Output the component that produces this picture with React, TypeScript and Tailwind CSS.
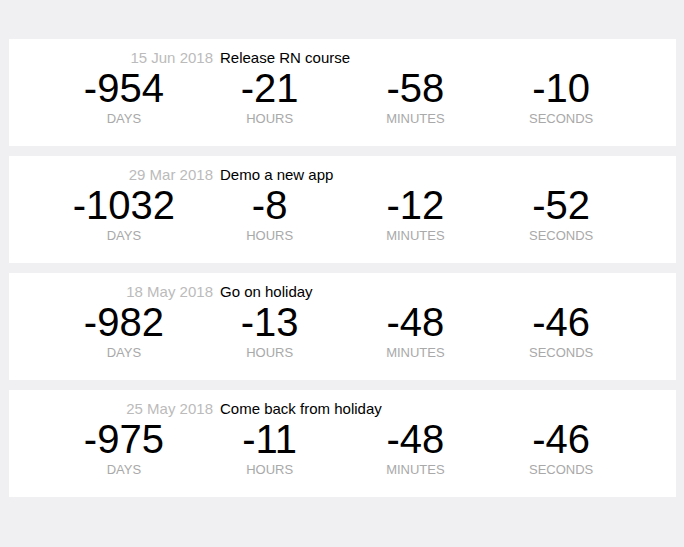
import React from 'react';

interface Countdown {
  id: string;
  date: string;
  title: string;
  days: number;
  hours: number;
  minutes: number;
  seconds: number;
}

const events: Countdown[] = [
  { id: '1', date: '15 Jun 2018', title: 'Release RN course', days: -954, hours: -21, minutes: -58, seconds: -10 },
  { id: '2', date: '29 Mar 2018', title: 'Demo a new app', days: -1032, hours: -8, minutes: -12, seconds: -52 },
  { id: '3', date: '18 May 2018', title: 'Go on holiday', days: -982, hours: -13, minutes: -48, seconds: -46 },
  { id: '4', date: '25 May 2018', title: 'Come back from holiday', days: -975, hours: -11, minutes: -48, seconds: -46 },
];

const Unit: React.FC<{ value: number; label: string }> = ({ value, label }) => (
  <div className="flex flex-col items-center">
    <span className="text-[40px] leading-[45px] text-black">{value}</span>
    <span className="text-[13px] leading-[15px] text-[#a9a9a9] uppercase">{label}</span>
  </div>
);

const EventCard: React.FC<{ event: Countdown }> = ({ event }) => (
  <div className="bg-white h-[107px] pt-[10px]">
    <div className="flex items-center text-[15px] leading-[17px]">
      <span className="w-[204px] text-right text-[#bbbbbb]">{event.date}</span>
      <span className="ml-[7px] text-black">{event.title}</span>
    </div>
    <div className="grid grid-cols-4 px-[42px]">
      <Unit value={event.days} label="Days" />
      <Unit value={event.hours} label="Hours" />
      <Unit value={event.minutes} label="Minutes" />
      <Unit value={event.seconds} label="Seconds" />
    </div>
  </div>
);

const App: React.FC = () => {
  return (
    <div
      className="min-h-[547px] bg-[#f0eff2] pt-[39px] pl-[9px] pr-[8px] flex flex-col gap-[10px]"
      style={{ fontFamily: '"Liberation Sans", Arial, sans-serif' }}
    >
      {events.map(e => <EventCard key={e.id} event={e} />)}
    </div>
  );
};

export default App;
